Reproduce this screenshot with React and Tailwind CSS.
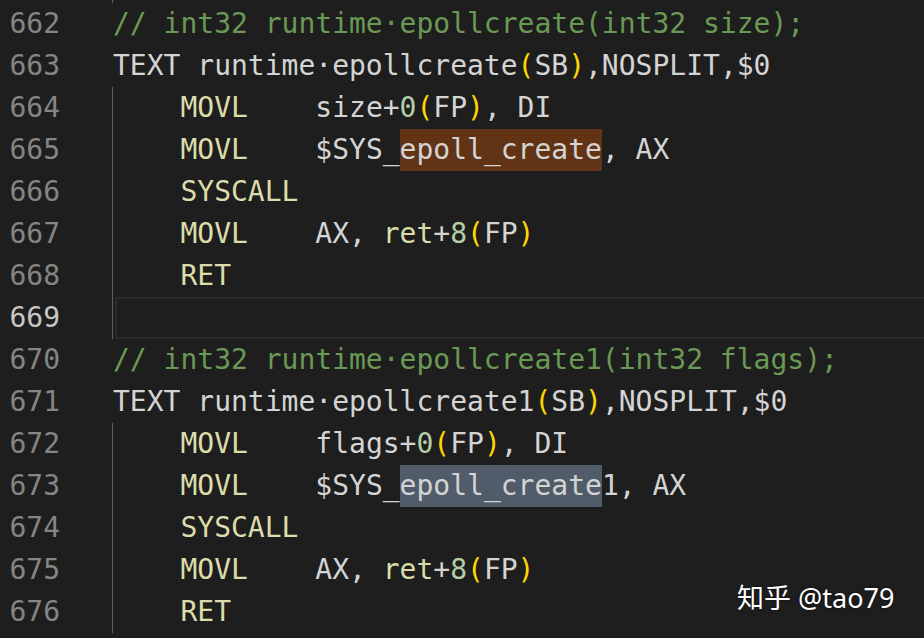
import React from 'react';

const tone = {
  d: 'text-[#d4d4d4]',
  c: 'text-[#6a9955]',
  f: 'text-[#dcdcaa]',
  n: 'text-[#b5cea8]',
  b: 'text-[#ffd700]',
  m1: 'text-[#d4d4d4] bg-[#623315] inline-block h-[42px] align-top',
  m2: 'text-[#d4d4d4] bg-[#515c6a] inline-block h-[42px] align-top',
};

const movArg = (reg) => [
  ['d', '    '], ['f', 'MOVL'], ['d', `    ${reg}+`], ['n', '0'], ['b', '('], ['d', 'FP'], ['b', ')'], ['d', ', DI'],
];

const movRet = [
  ['d', '    '], ['f', 'MOVL'], ['d', '    AX, '], ['f', 'ret'], ['d', '+'], ['n', '8'], ['b', '('], ['d', 'FP'], ['b', ')'],
];

const textLine = (name) => [
  ['d', `TEXT runtime·${name}`], ['b', '('], ['d', 'SB'], ['b', ')'], ['d', ',NOSPLIT,$0'],
];

const lines = [
  { no: 662, toks: [['c', '// int32 runtime·epollcreate(int32 size);']] },
  { no: 663, toks: textLine('epollcreate') },
  { no: 664, guide: true, toks: movArg('size') },
  { no: 665, guide: true, toks: [['d', '    '], ['f', 'MOVL'], ['d', '    $SYS_'], ['m1', 'epoll_create'], ['d', ', AX']] },
  { no: 666, guide: true, toks: [['f', '    SYSCALL']] },
  { no: 667, guide: true, toks: movRet },
  { no: 668, guide: true, toks: [['f', '    RET']] },
  { no: 669, guide: true, current: true, toks: [] },
  { no: 670, toks: [['c', '// int32 runtime·epollcreate1(int32 flags);']] },
  { no: 671, toks: textLine('epollcreate1') },
  { no: 672, guide: true, toks: movArg('flags') },
  { no: 673, guide: true, toks: [['d', '    '], ['f', 'MOVL'], ['d', '    $SYS_'], ['m2', 'epoll_create'], ['d', '1, AX']] },
  { no: 674, guide: true, toks: [['f', '    SYSCALL']] },
  { no: 675, guide: true, toks: movRet },
  { no: 676, guide: true, toks: [['f', '    RET']] },
];

export default function App() {
  return (
    <div
      className="relative w-[924px] h-[638px] overflow-hidden bg-[#1e1e1e] text-[28px] leading-[42px]"
      style={{ fontFamily: '"DejaVu Sans Mono", "Liberation Mono", monospace' }}
    >
      {/* guide stub from the block above */}
      <div className="absolute left-[112px] top-0 w-px h-[3px] bg-[#5f5f5f]" />

      <div className="pt-[3px]">
        {lines.map(line => (
          <div key={line.no} className="flex h-[42px]">
            <div
              className={`w-[60px] text-right whitespace-pre ${
                line.current ? 'text-[#c6c6c6]' : 'text-[#858585]'
              }`}
            >
              {line.no}
            </div>
            <div className="w-[52px]" />
            <div
              className={`flex-1 border-l whitespace-pre ${
                line.guide ? 'border-[#5f5f5f]' : 'border-transparent'
              }`}
            >
              {line.current ? (
                <div className="ml-[2px] -mr-[4px] h-[42px] border-2 border-[#2b2b2b]" />
              ) : (
                line.toks.map((t, i) => (
                  <span key={i} className={tone[t[0]]}>{t[1]}</span>
                ))
              )}
            </div>
          </div>
        ))}
      </div>

      {/* watermark */}
      <div
        className="absolute left-[737px] top-[584px] text-[27px] leading-none text-white whitespace-pre"
        style={{
          fontFamily: '"Noto Sans", "Noto Sans CJK SC", sans-serif',
          textShadow: '0 0 3px rgba(0,0,0,0.6)',
        }}
      >
        知乎 @tao79
      </div>
    </div>
  );
}
